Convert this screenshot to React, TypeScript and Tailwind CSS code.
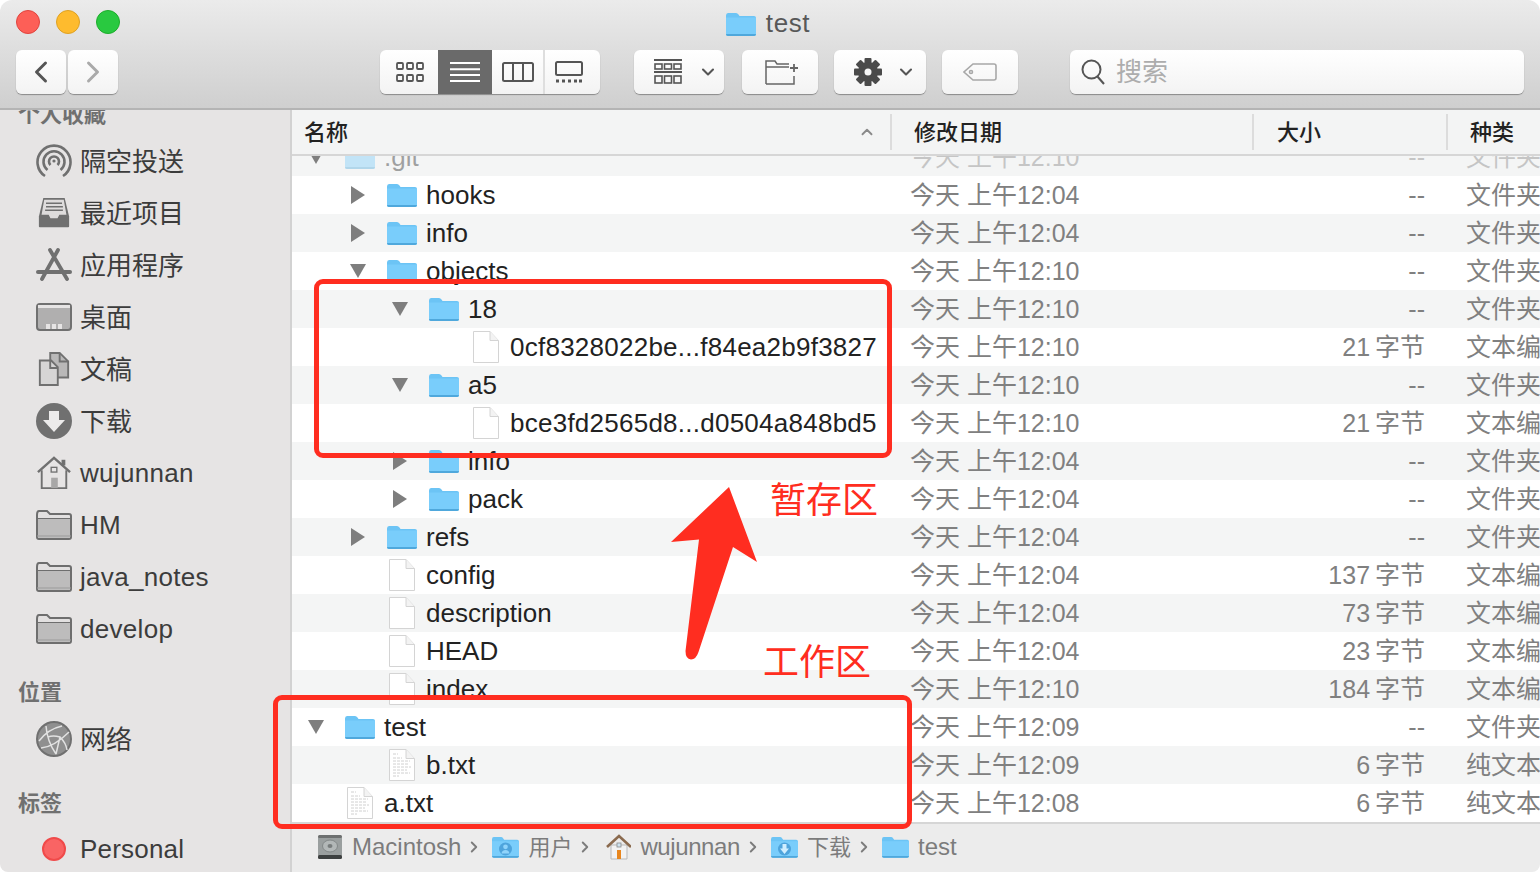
import { ChevronLeft, ChevronRight, ChevronDown, ChevronUp } from 'lucide-react';

interface Row {
  name: string;
  depth: number;
  icon: 'folder' | 'blank' | 'text';
  open?: boolean;
  dim?: boolean;
  date: string;
  size: string;
  kind: string;
}

const FONT = "font-['Liberation_Sans','Noto_Sans_CJK_SC',sans-serif]";

const ROWS: Row[] = [
  { name: '.git', depth: 0, icon: 'folder', open: true, dim: true, date: '今天 上午12:10', size: '--', kind: '文件夹' },
  { name: 'hooks', depth: 1, icon: 'folder', open: false, date: '今天 上午12:04', size: '--', kind: '文件夹' },
  { name: 'info', depth: 1, icon: 'folder', open: false, date: '今天 上午12:04', size: '--', kind: '文件夹' },
  { name: 'objects', depth: 1, icon: 'folder', open: true, date: '今天 上午12:10', size: '--', kind: '文件夹' },
  { name: '18', depth: 2, icon: 'folder', open: true, date: '今天 上午12:10', size: '--', kind: '文件夹' },
  { name: '0cf8328022be...f84ea2b9f3827', depth: 3, icon: 'blank', date: '今天 上午12:10', size: '21 字节', kind: '文本编辑' },
  { name: 'a5', depth: 2, icon: 'folder', open: true, date: '今天 上午12:10', size: '--', kind: '文件夹' },
  { name: 'bce3fd2565d8...d0504a848bd5', depth: 3, icon: 'blank', date: '今天 上午12:10', size: '21 字节', kind: '文本编辑' },
  { name: 'info', depth: 2, icon: 'folder', open: false, date: '今天 上午12:04', size: '--', kind: '文件夹' },
  { name: 'pack', depth: 2, icon: 'folder', open: false, date: '今天 上午12:04', size: '--', kind: '文件夹' },
  { name: 'refs', depth: 1, icon: 'folder', open: false, date: '今天 上午12:04', size: '--', kind: '文件夹' },
  { name: 'config', depth: 1, icon: 'blank', date: '今天 上午12:04', size: '137 字节', kind: '文本编辑' },
  { name: 'description', depth: 1, icon: 'blank', date: '今天 上午12:04', size: '73 字节', kind: '文本编辑' },
  { name: 'HEAD', depth: 1, icon: 'blank', date: '今天 上午12:04', size: '23 字节', kind: '文本编辑' },
  { name: 'index', depth: 1, icon: 'blank', date: '今天 上午12:10', size: '184 字节', kind: '文本编辑' },
  { name: 'test', depth: 0, icon: 'folder', open: true, date: '今天 上午12:09', size: '--', kind: '文件夹' },
  { name: 'b.txt', depth: 1, icon: 'text', date: '今天 上午12:09', size: '6 字节', kind: '纯文本' },
  { name: 'a.txt', depth: 0, icon: 'text', date: '今天 上午12:08', size: '6 字节', kind: '纯文本' },
];

function BlueFolder({ className = 'w-[30px] h-[24px]' }: { className?: string }) {
  return (
    <svg viewBox="0 0 30 24" className={className}>
      <path d="M0 3.500Q0 1 2 1H10Q11.500 1 12.500 2.500L13.500 4H28Q30 4 30 6V22Q30 24 28 24H2Q0 24 0 22Z" fill="#6cc4f5" />
      <path d="M0 5.500H30V22H0Z" fill="#79cdfb" />
      <path d="M0 22H30Q30 24 28 24H2Q0 24 0 22Z" fill="#4fa8dc" />
    </svg>
  );
}

function FileIcon({ lines }: { lines?: boolean }) {
  return (
    <svg viewBox="0 0 26 32" className="w-[26px] h-[32px]">
      <path d="M.5.5H17L25.500 9.500V31.500H.5Z" fill="#fff" stroke="#d4d4d4" />
      <path d="M17 .5V9.500H25.500" fill="#f3f3f3" stroke="#d4d4d4" />
      {lines && (
        <path d="M4 5H9M4 9H13M4 12H21M4 15H20M4 18H22M4 21H18M4 24H21M4 27H10" stroke="#c4c4c4" strokeWidth="0.8" strokeDasharray="3 1" />
      )}
    </svg>
  );
}

function Triangle({ open }: { open: boolean }) {
  return open ? (
    <svg viewBox="0 0 16 14" className="w-[16px] h-[14px] -ml-[1px]">
      <path d="M0 0H16L8 14Z" fill="#7e7e7e" />
    </svg>
  ) : (
    <svg viewBox="0 0 14 18" className="w-[14px] h-[18px]">
      <path d="M0 0L14 9L0 18Z" fill="#7e7e7e" />
    </svg>
  );
}

function FileRow({ row, index }: { row: Row; index: number }) {
  const fade = row.dim ? 'opacity-40' : '';
  return (
    <div className={`flex items-center h-[38px] ${index % 2 === 0 ? 'bg-[#f4f5f5]' : 'bg-white'}`}>
      <div className="flex items-center w-[599px] shrink-0" style={{ paddingLeft: 17 + row.depth * 42 }}>
        <div className="w-[36px] shrink-0 flex items-center">
          {row.open !== undefined && <Triangle open={row.open} />}
        </div>
        <div className={`w-[30px] shrink-0 flex justify-center ${fade}`}>
          {row.icon === 'folder' ? <BlueFolder /> : <FileIcon lines={row.icon === 'text'} />}
        </div>
        <span className={`ml-[9px] text-[26px] text-[#222] whitespace-nowrap ${row.depth === 3 ? 'tracking-[0.25px]' : ''} ${fade}`}>{row.name}</span>
      </div>
      <div className={`w-[534px] shrink-0 pl-[19px] pt-[2px] flex justify-between text-[25px] text-[#808080] whitespace-nowrap ${fade}`}>
        <span>{row.date}</span>
        <span className="[word-spacing:-2px]">{row.size}</span>
      </div>
      <span className={`pl-[41px] pt-[2px] text-[25px] text-[#808080] whitespace-nowrap ${fade}`}>{row.kind}</span>
    </div>
  );
}

function ToolButton({ className, children }: { className: string; children: React.ReactNode }) {
  return (
    <div className={`h-[44px] rounded-[6px] bg-gradient-to-b from-white to-[#f3f3f3] shadow-[0_1px_1px_rgba(0,0,0,0.35)] flex items-center justify-center ${className}`}>
      {children}
    </div>
  );
}

function GreyFolder() {
  return (
    <svg viewBox="0 0 36 30" className="w-[36px] h-[30px]">
      <path d="M1 5Q1 1 3 1H11L14 4H33Q35 4 35 6V27Q35 29 33 29H3Q1 29 1 27Z" fill="#e2e0e0" stroke="#6e6e6e" strokeWidth="2" />
      <path d="M2 9H34V28H2Z" fill="#bdbcbc" />
      <path d="M2 8.500H34" stroke="#6e6e6e" strokeWidth="1" />
      <path d="M1 26H35" stroke="#9b9b9b" strokeWidth="1" />
    </svg>
  );
}

const SIDE_ICONS: Record<string, React.ReactNode> = {
  airdrop: (
    <svg viewBox="0 0 36 36" className="w-[36px] h-[36px]" fill="none" stroke="#707070" strokeWidth="2.600">
      <path d="M9 33A16.500 16.500 0 1 1 27 33" />
      <path d="M11.500 27A10.500 10.500 0 1 1 24.500 27" />
      <path d="M14.500 22A5 5 0 1 1 21.500 22" />
      <circle cx="18" cy="18" r="1.600" fill="#707070" stroke="none" />
    </svg>
  ),
  recents: (
    <svg viewBox="0 0 36 36" className="w-[36px] h-[32px]">
      <path d="M6 1H30L35 22V33Q35 34 34 34H2Q1 34 1 33V22Z" fill="#707070" />
      <path d="M7 3H29L32 20H24L22 24H14L12 20H4Z" fill="#dedcdc" />
      <path d="M9 7H27M9 11H28M8 15H28" stroke="#707070" strokeWidth="1.600" />
    </svg>
  ),
  apps: (
    <svg viewBox="0 0 36 34" className="w-[36px] h-[34px]" fill="none" stroke="#707070" strokeLinecap="round">
      <path d="M14 2L31 31M22 2L6 31" strokeWidth="3.800" />
      <path d="M2 24H34" strokeWidth="4" />
    </svg>
  ),
  desktop: (
    <svg viewBox="0 0 36 28" className="w-[36px] h-[28px]">
      <rect x="1" y="1" width="34" height="26" rx="3" fill="#b0afaf" stroke="#707070" strokeWidth="2" />
      <path d="M2 2H34V5H2Z" fill="#e6e4e4" />
      <path d="M10 21H14V26H10ZM16 21H20V26H16ZM22 21H26V26H22Z" fill="#e6e4e4" />
    </svg>
  ),
  docs: (
    <svg viewBox="0 0 34 36" className="w-[34px] h-[34px]" stroke="#707070" strokeWidth="2">
      <path d="M13 1H23L32 10V27H13Z" fill="#b9b8b8" />
      <path d="M23 1V10H32" fill="none" />
      <path d="M2 9H14L21 16V35H2Z" fill="#d6d5d5" />
      <path d="M13 9V17H21" fill="none" />
    </svg>
  ),
  downloads: (
    <svg viewBox="0 0 36 36" className="w-[36px] h-[36px]">
      <circle cx="18" cy="18" r="18" fill="#707070" />
      <path d="M13 8H23V17H29L18 29L7 17H13Z" fill="#ecebeb" />
    </svg>
  ),
  home: (
    <svg viewBox="0 0 36 36" className="w-[36px] h-[34px]" stroke="#707070" strokeWidth="2" fill="none">
      <path d="M1 17L18 2L35 17" strokeWidth="2.600" />
      <path d="M28 4V10" strokeWidth="4" />
      <path d="M5 15V34H31V15" fill="#e6e4e4" />
      <rect x="15" y="12" width="6" height="5" strokeWidth="1.400" />
      <rect x="15" y="23" width="7" height="11" fill="#a8a7a7" stroke="none" />
    </svg>
  ),
  network: (
    <svg viewBox="0 0 36 36" className="w-[36px] h-[36px]">
      <circle cx="18" cy="18" r="17" fill="#8f8f8f" stroke="#707070" strokeWidth="2" />
      <path d="M3 20Q12 8 26 5M10 5Q11 20 20 33M5 27Q18 26 33 11M24 16Q30 22 31 29M12 16Q17 14 24 16L20 33" fill="none" stroke="#e2e2e2" strokeWidth="1.500" />
    </svg>
  ),
};

const FAVORITES = [
  { icon: SIDE_ICONS.airdrop, label: '隔空投送' },
  { icon: SIDE_ICONS.recents, label: '最近项目' },
  { icon: SIDE_ICONS.apps, label: '应用程序' },
  { icon: SIDE_ICONS.desktop, label: '桌面' },
  { icon: SIDE_ICONS.docs, label: '文稿' },
  { icon: SIDE_ICONS.downloads, label: '下载' },
  { icon: SIDE_ICONS.home, label: 'wujunnan' },
  { icon: <GreyFolder />, label: 'HM' },
  { icon: <GreyFolder />, label: 'java_notes' },
  { icon: <GreyFolder />, label: 'develop' },
];

function SideItem({ icon, label }: { icon: React.ReactNode; label: string }) {
  const latin = /[a-z]/i.test(label);
  return (
    <div className="flex items-center h-[52px] pl-[36px]">
      <div className="w-[36px] shrink-0 flex justify-center">{icon}</div>
      <span className={`ml-[8px] text-[26px] text-[#3c3c3c] whitespace-nowrap ${latin ? 'tracking-[0.3px]' : 'pt-[2px]'}`}>{label}</span>
    </div>
  );
}

function Sidebar() {
  return (
    <aside className="w-[292px] shrink-0 bg-[#e6e4e4] border-r-2 border-[#d2d2d2] overflow-hidden">
      <div className="-mt-[5px]">
        <div className="h-[24px] leading-[20px] pl-[18px] text-[22px] font-semibold text-[#707070]">个人收藏</div>
        <div className="mt-[6px]">
          {FAVORITES.map((item) => (
            <SideItem key={item.label} icon={item.icon} label={item.label} />
          ))}
        </div>
        <div className="pl-[18px] mt-[22px] h-[32px] leading-[32px] text-[22px] font-semibold text-[#707070]">位置</div>
        <div className="mt-[4px]"><SideItem icon={SIDE_ICONS.network} label="网络" /></div>
        <div className="pl-[18px] mt-[23px] h-[32px] leading-[32px] text-[22px] font-semibold text-[#707070]">标签</div>
        <div className="flex items-center h-[52px] mt-[3px] pl-[42px]">
          <div className="w-[24px] h-[24px] rounded-full bg-[#f96464] border-2 border-[#f04a4a]" />
          <span className="ml-[14px] text-[26px] text-[#3c3c3c] tracking-[0.2px]">Personal</span>
        </div>
      </div>
    </aside>
  );
}

function Crumb({ icon, label, textClass = 'text-[24px]', last }: { icon: React.ReactNode; label: string; textClass?: string; last?: boolean }) {
  return (
    <div className="flex items-center">
      {icon}
      <span className={`ml-[9px] text-[#7c7c7c] whitespace-nowrap ${textClass}`}>{label}</span>
      {!last && <ChevronRight size={18} strokeWidth={2.5} className="ml-[4px] mr-[9px] text-[#7c7c7c]" />}
    </div>
  );
}

function BadgedFolder({ glyph }: { glyph: 'user' | 'down' }) {
  return (
    <div className="relative w-[27px] h-[22px]">
      <BlueFolder className="w-[27px] h-[22px]" />
      <svg viewBox="0 0 27 22" className="absolute inset-0 w-[27px] h-[22px]">
        <circle cx="13.500" cy="13" r="6.500" fill="#4ea4dc" />
        {glyph === 'user' ? (
          <path d="M13.500 8.500A2.300 2.300 0 1 1 13.500 13.200A2.300 2.300 0 1 1 13.500 8.500ZM9.500 17.500Q10 14 13.500 14Q17 14 17.500 17.500Z" fill="#8fd4fb" />
        ) : (
          <path d="M11.500 8H15.500V12.500H18L13.500 18L9 12.500H11.500Z" fill="#cfeeff" />
        )}
      </svg>
    </div>
  );
}

function ColorHome() {
  return (
    <svg viewBox="0 0 28 26" className="w-[28px] h-[26px]">
      <path d="M8 11V25H24V11Z" fill="#f2f2f2" stroke="#b9b9b9" />
      <path d="M4 13L16 2L28 13" fill="none" stroke="#8a6a4e" strokeWidth="2.600" />
      <path d="M14 16H18V25H14Z" fill="#e8861e" />
      <rect x="14" y="9" width="4" height="4" fill="#cfe3ef" stroke="#8a8a8a" strokeWidth="0.800" />
    </svg>
  );
}

function DiskIcon() {
  return (
    <svg viewBox="0 0 26 26" className="w-[26px] h-[26px]">
      <rect x="1" y="1" width="24" height="24" rx="3" fill="#9a9f9f" />
      <rect x="1" y="1" width="24" height="3" rx="1.500" fill="#6d7070" />
      <ellipse cx="13" cy="12" rx="7.500" ry="6" fill="#b2b7b7" stroke="#838888" />
      <ellipse cx="13" cy="12" rx="2.500" ry="2" fill="#777c7c" />
      <rect x="1" y="21" width="24" height="4" rx="1.500" fill="#3d4040" />
    </svg>
  );
}

function Annotations() {
  return (
    <>
      <div className="absolute left-[314px] top-[279px] w-[578px] h-[179px] rounded-[9px] border-[5px] border-[#ff2d20]" />
      <div className="absolute left-[273px] top-[695px] w-[639px] h-[134px] rounded-[9px] border-[5px] border-[#ff2d20]" />
      <svg className="absolute left-[660px] top-[480px] w-[110px] h-[190px]" viewBox="660 480 110 190">
        <path d="M729 487L671 542L699 539.500L685.500 651Q685.500 659 691 659.500Q696 659.500 698.500 652L733 547L757 562Z" fill="#ff2d20" />
      </svg>
      <span className="absolute left-[770px] top-[476px] text-[36px] leading-[50px] text-[#ff2d20] whitespace-nowrap">暂存区</span>
      <span className="absolute left-[763px] top-[638px] text-[36px] leading-[50px] text-[#ff2d20] whitespace-nowrap">工作区</span>
    </>
  );
}

const GEAR_TEETH = [0, 45, 90, 135];

export default function App() {
  return (
    <div className={`relative w-[1540px] h-[872px] overflow-hidden bg-white ${FONT}`}>
      <div className="flex flex-col h-full rounded-t-[12px] rounded-b-[8px] overflow-hidden">
        {/* Title bar and toolbar */}
        <header className="h-[110px] shrink-0 bg-gradient-to-b from-[#ebebeb] to-[#cfcfcf] border-b-2 border-[#b4b4b4] px-[16px]">
          <div className="h-[47px] flex items-center">
            <div className="flex gap-[16px] -mt-[3px]">
              <div className="w-[24px] h-[24px] rounded-full bg-[#fd5f57] border border-[#e0443e]" />
              <div className="w-[24px] h-[24px] rounded-full bg-[#febb2e] border border-[#dea123]" />
              <div className="w-[24px] h-[24px] rounded-full bg-[#29c940] border border-[#1dad2b]" />
            </div>
            <div className="flex-1 flex items-center justify-center gap-[10px] -ml-[108px]">
              <BlueFolder />
              <span className="text-[26px] text-[#585858] tracking-[0.6px]">test</span>
            </div>
          </div>
          <div className="flex items-center mt-[3px]">
            <div className="flex gap-[2px]">
              <ToolButton className="w-[50px]"><ChevronLeft size={36} strokeWidth={2} className="text-[#555]" /></ToolButton>
              <ToolButton className="w-[50px]"><ChevronRight size={36} strokeWidth={2} className="text-[#aaa]" /></ToolButton>
            </div>
            <ToolButton className="w-[220px] ml-[262px] overflow-hidden !justify-start">
              <div className="w-[58px] pl-[1px] flex justify-center">
                <svg viewBox="0 0 28 20" className="w-[28px] h-[20px]" fill="none" stroke="#555" strokeWidth="1.800">
                  <rect x="1" y="1" width="6" height="6" rx="1" /><rect x="11" y="1" width="6" height="6" rx="1" /><rect x="21" y="1" width="6" height="6" rx="1" />
                  <rect x="1" y="13" width="6" height="6" rx="1" /><rect x="11" y="13" width="6" height="6" rx="1" /><rect x="21" y="13" width="6" height="6" rx="1" />
                </svg>
              </div>
              <div className="w-[54px] h-full bg-[#6a6a6a] flex items-center justify-center">
                <svg viewBox="0 0 30 20" className="w-[30px] h-[20px]" stroke="#fff" strokeWidth="2"><path d="M0 1H30M0 7.300H30M0 13H30M0 19H30" /></svg>
              </div>
              <div className="w-[53px] h-full flex items-center justify-center border-r-2 border-[#dedede]">
                <svg viewBox="0 0 32 20" className="w-[32px] h-[20px]" fill="none" stroke="#555" strokeWidth="2"><rect x="1" y="1" width="30" height="18" rx="1.500" /><path d="M11 1V19M21 1V19" /></svg>
              </div>
              <div className="flex-1 flex items-center pl-[10px]">
                <svg viewBox="0 0 28 22" className="w-[28px] h-[22px]" fill="none" stroke="#555" strokeWidth="2"><rect x="1" y="1" width="26" height="13" rx="1.500" /><path d="M1 20H4M7 20H10M13 20H16M19 20H22M24 20H27" strokeWidth="3" /></svg>
              </div>
            </ToolButton>
            <ToolButton className="w-[90px] ml-[34px] gap-[16px] !justify-start pl-[20px]">
              <svg viewBox="0 0 28 26" className="w-[28px] h-[26px]" fill="none" stroke="#555" strokeWidth="1.600">
                <path d="M0 1H28M0 13H28" strokeWidth="2" />
                <rect x="1" y="5" width="7" height="5" /><rect x="10.500" y="5" width="7" height="5" /><rect x="20" y="5" width="7" height="5" />
                <rect x="1" y="17" width="7" height="7" /><rect x="10.500" y="17" width="7" height="7" /><rect x="20" y="17" width="7" height="7" />
              </svg>
              <ChevronDown size={20} strokeWidth={2.5} className="text-[#555]" />
            </ToolButton>
            <ToolButton className="w-[76px] ml-[18px] pl-[4px]">
              <svg viewBox="0 0 34 26" className="w-[34px] h-[26px]" fill="none" stroke="#666" strokeWidth="1.500">
                <path d="M1 25V2H10L12 5H24M1 8H24M1 25H29V17" />
                <path d="M29 5V13M25 9H33" strokeWidth="1.800" />
              </svg>
            </ToolButton>
            <ToolButton className="w-[92px] ml-[16px] gap-[14px] !justify-start pl-[20px]">
              <svg viewBox="0 0 28 28" className="w-[28px] h-[28px]" fill="#4a4a4a">
                {GEAR_TEETH.map((angle) => (
                  <rect key={angle} x="10.500" y="0" width="7" height="28" rx="1" transform={`rotate(${angle} 14 14)`} />
                ))}
                <circle cx="14" cy="14" r="10" />
                <circle cx="14" cy="14" r="3.500" fill="#f5f5f5" />
              </svg>
              <ChevronDown size={20} strokeWidth={2.5} className="text-[#555]" />
            </ToolButton>
            <ToolButton className="w-[76px] ml-[16px]">
              <svg viewBox="0 0 34 18" className="w-[34px] h-[18px]" fill="none" stroke="#a8a8a8" strokeWidth="1.600">
                <path d="M10 1H31Q33 1 33 3V15Q33 17 31 17H10L1 9Z" />
                <circle cx="8" cy="9" r="1.500" />
              </svg>
            </ToolButton>
            <ToolButton className="w-[454px] ml-[52px] !justify-start pl-[11px]">
              <svg viewBox="0 0 24 26" className="w-[24px] h-[26px]" fill="none" stroke="#555" strokeWidth="2"><circle cx="10.500" cy="10.500" r="9" /><path d="M16 17L23 25" /></svg>
              <span className="ml-[11px] text-[26px] text-[#adadad]">搜索</span>
            </ToolButton>
          </div>
        </header>

        <div className="flex flex-1 min-h-0">
          <Sidebar />
          <main className="flex-1 min-w-0 flex flex-col">
            {/* Column headers */}
            <div className="h-[46px] shrink-0 bg-[#f3f4f4] border-b-2 border-[#d6d6d6] flex items-center text-[22px] font-medium text-[#222]">
              <div className="w-[600px] h-[36px] pl-[12px] pr-[14px] border-r-2 border-[#dcdcdc] flex items-center justify-between">
                <span>名称</span>
                <ChevronUp size={18} strokeWidth={2.5} className="text-[#8a8a8a]" />
              </div>
              <div className="w-[362px] h-[36px] pl-[22px] border-r-2 border-[#dcdcdc] flex items-center">修改日期</div>
              <div className="w-[194px] h-[36px] pl-[23px] border-r-2 border-[#dcdcdc] flex items-center">大小</div>
              <div className="pl-[22px]">种类</div>
            </div>
            {/* File list, scrolled so the first row is cut by the headers */}
            <div className="h-[668px] shrink-0 overflow-hidden border-b-2 border-[#d6d6d6]">
              <div className="-mt-[18px]">
                {ROWS.map((row, i) => (
                  <FileRow key={row.name + i} row={row} index={i} />
                ))}
              </div>
            </div>
            {/* Path bar */}
            <div className="flex-1 bg-[#ececec] flex items-center pl-[25px] pb-[2px]">
              <Crumb icon={<DiskIcon />} label="Macintosh" />
              <Crumb icon={<BadgedFolder glyph="user" />} label="用户" textClass="text-[22px]" />
              <Crumb icon={<ColorHome />} label="wujunnan" textClass="text-[24px] tracking-[-0.4px]" />
              <Crumb icon={<BadgedFolder glyph="down" />} label="下载" textClass="text-[22px]" />
              <Crumb icon={<BlueFolder className="w-[27px] h-[22px]" />} label="test" last />
            </div>
          </main>
        </div>
      </div>
      <Annotations />
    </div>
  );
}
